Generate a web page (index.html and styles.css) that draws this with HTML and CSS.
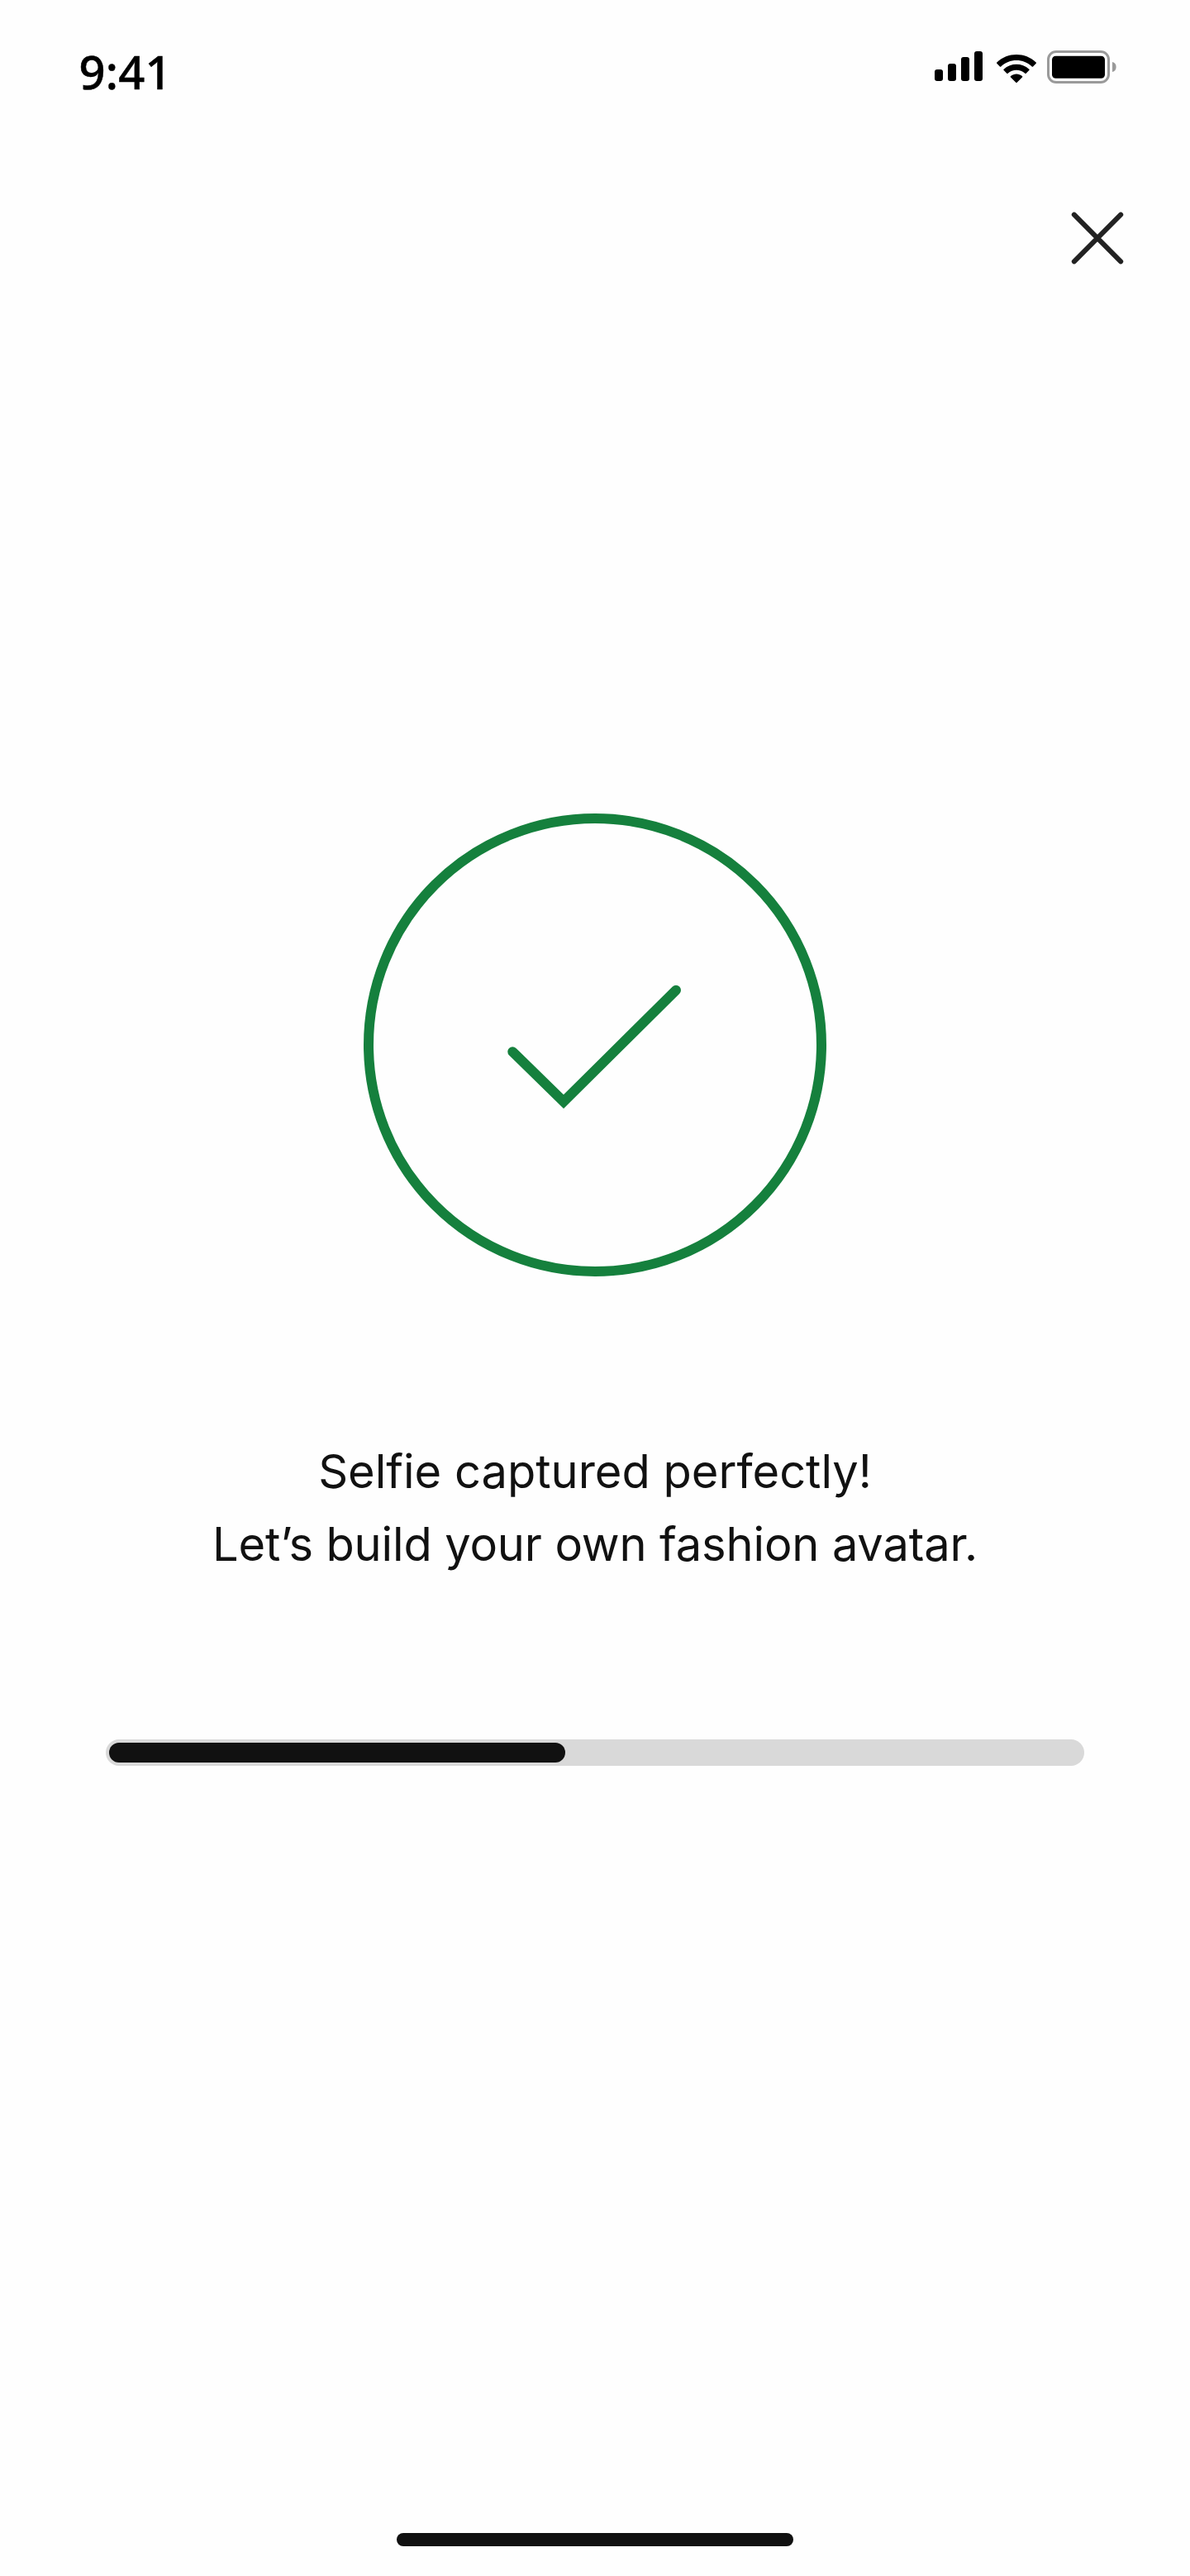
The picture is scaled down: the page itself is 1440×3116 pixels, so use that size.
FILE: index.html
```html
<!DOCTYPE html>
<html lang="en">
<head>
<meta charset="utf-8">
<title>Selfie captured</title>
<link rel="stylesheet" href="styles.css">
</head>
<body>
<main class="screen">
  <header class="status-bar">
    <time class="clock">9:41</time>
    <div class="status-icons">
      <svg class="signal" width="58" height="36" viewBox="0 0 58 36" aria-hidden="true">
        <rect x="0" y="22" width="10" height="14" rx="3"/>
        <rect x="16" y="15" width="10" height="21" rx="3"/>
        <rect x="32" y="7" width="10" height="29" rx="3"/>
        <rect x="48" y="0" width="10" height="36" rx="3"/>
      </svg>
      <svg class="wifi" width="48" height="34" viewBox="0 0 15.28 10.97" preserveAspectRatio="none" aria-hidden="true">
        <path d="M7.637 2.277C9.853 2.277 11.984 3.129 13.59 4.656C13.711 4.774 13.904 4.772 14.023 4.652L15.179 3.486C15.239 3.425 15.273 3.343 15.272 3.257C15.272 3.172 15.237 3.09 15.176 3.03C10.961 -1.01 4.311 -1.01 .096 3.03C.035 3.09 .001 3.172 0 3.257C0 3.343 .033 3.425 .094 3.486L1.25 4.652C1.369 4.772 1.562 4.774 1.683 4.656C3.289 3.129 5.421 2.277 7.637 2.277Z"/>
        <path d="M7.634 6.073C8.852 6.073 10.026 6.526 10.928 7.343C11.05 7.459 11.242 7.456 11.361 7.337L12.516 6.17C12.576 6.109 12.61 6.026 12.609 5.94C12.608 5.854 12.573 5.771 12.511 5.711C9.763 3.155 5.508 3.155 2.76 5.711C2.698 5.771 2.662 5.854 2.661 5.94C2.661 6.026 2.694 6.109 2.755 6.17L3.91 7.337C4.029 7.456 4.221 7.459 4.343 7.343C5.245 6.526 6.418 6.074 7.634 6.073Z"/>
        <path d="M9.949 8.627C9.951 8.713 9.917 8.797 9.855 8.857L7.858 10.873C7.799 10.932 7.719 10.965 7.636 10.965C7.553 10.965 7.473 10.932 7.415 10.873L5.417 8.857C5.355 8.797 5.321 8.713 5.323 8.627C5.325 8.54 5.362 8.458 5.427 8.4C6.702 7.322 8.57 7.322 9.846 8.4C9.91 8.458 9.948 8.54 9.949 8.627Z"/>
      </svg>
      <svg class="battery" width="84" height="40" viewBox="0 0 84 40" aria-hidden="true">
        <rect class="battery-case" x="1.5" y="1.5" width="73" height="37" rx="9.5"/>
        <rect x="6" y="6.7" width="64" height="27" rx="4.5"/>
        <path class="battery-cap" d="M79 14V26A6.2 6.2 0 0 0 79 14Z"/>
      </svg>
    </div>
  </header>

  <div class="toolbar">
    <button class="close" type="button" aria-label="Close">
      <svg width="64" height="64" viewBox="0 0 64 64"><path d="M3.8 3.7L60.2 60.3M60.2 3.7L3.8 60.3"/></svg>
    </button>
  </div>

  <section class="result">
    <svg class="success" width="560" height="560" viewBox="0 0 560 560" aria-hidden="true">
      <circle cx="280" cy="280" r="274"/>
      <path d="M180.3 288.2L242 348.6L378 213.7"/>
    </svg>
    <p class="message">Selfie captured perfectly!<br><span class="message-next">Let’s build your own fashion avatar.</span></p>
    <div class="progress"><div class="progress-fill"></div></div>
  </section>

  <div class="home-indicator"></div>
</main>
</body>
</html>
```
FILE: styles.css
```css
* { box-sizing: border-box; }

body {
  margin: 0;
  background: #fefefe;
  color: #111;
  font-family: Inter, "Liberation Sans", sans-serif;
}

.screen {
  display: flex;
  flex-direction: column;
  width: 1440px;
  height: 3116px;
  overflow: hidden;
}

.status-bar {
  display: flex;
  justify-content: space-between;
  align-items: flex-start;
  height: 176px;
  padding: 48px 89px 0 95.6px;
  color: #000;
}

.clock {
  font: 500 56px/76px "Noto Sans", sans-serif;
  letter-spacing: 0.2px;
  -webkit-text-stroke: 0.5px #000;
}

.status-icons {
  display: flex;
  align-items: flex-start;
  padding-top: 13px;
}

.signal { margin-top: 1px; }
.wifi { margin: 5px 13.5px 0 16.5px; }

.battery-case {
  fill: none;
  stroke: #9a9a9a;
  stroke-width: 3;
}

.battery-cap { fill: #9a9a9a; }

.toolbar {
  display: flex;
  justify-content: flex-end;
  height: 224px;
  padding: 80px 80px 0 0;
}

.close {
  width: 64px;
  height: 64px;
  padding: 0;
  border: 0;
  background: none;
}

.close svg {
  display: block;
  fill: none;
  stroke: #222;
  stroke-width: 6;
  stroke-linecap: round;
}

.result {
  display: flex;
  flex-direction: column;
  align-items: center;
  padding-top: 584px;
}

.success {
  fill: none;
  stroke: #15803d;
  stroke-width: 12;
  stroke-linecap: round;
}

.message {
  margin: 192px 0 0;
  font-size: 56px;
  line-height: 88px;
  text-align: center;
}

.message-next { letter-spacing: -0.14px; }

.progress {
  width: 1184px;
  height: 32px;
  margin-top: 192px;
  padding: 4px;
  border-radius: 16px;
  background: #d9d9d9;
}

.progress-fill {
  width: 552px;
  height: 24px;
  border-radius: 12px;
  background: #111;
}

.home-indicator {
  width: 480px;
  height: 16px;
  margin: auto auto 36px;
  border-radius: 8px;
  background: #111;
}
```
